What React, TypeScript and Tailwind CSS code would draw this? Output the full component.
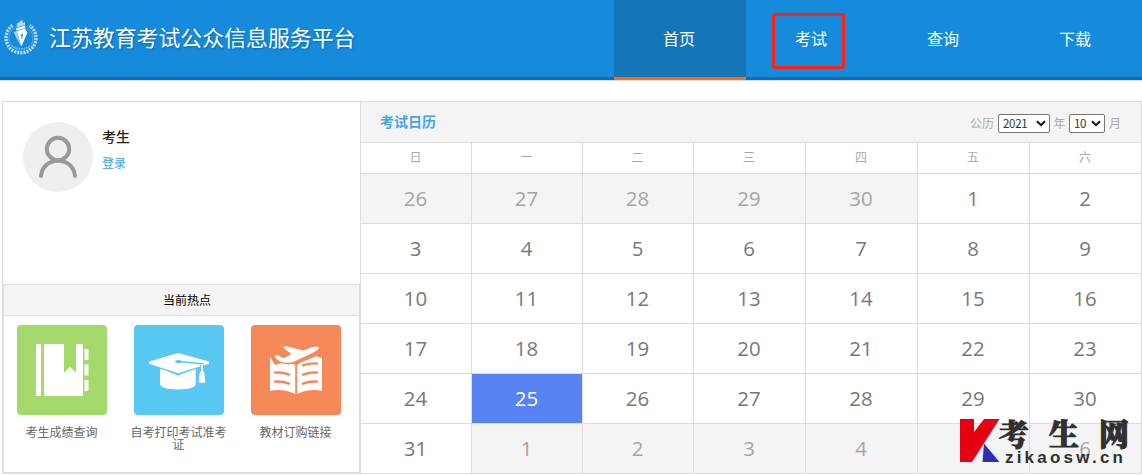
import React from "react";

const NAV = ["首页", "考试", "查询", "下载"];
const WEEKDAYS = ["日", "一", "二", "三", "四", "五", "六"];
const DAYS: { n: number; out: boolean }[] = [
  ...[26, 27, 28, 29, 30].map((n) => ({ n, out: true })),
  ...Array.from({ length: 31 }, (_, i) => ({ n: i + 1, out: false })),
  ...[1, 2, 3, 4, 5, 6].map((n) => ({ n, out: true })),
];
const TODAY = 25;

function Emblem() {
  return (
    <svg className="-mt-[3px]" width="36" height="38" viewBox="0 0 36 38" fill="none">
      <path d="M9.5 7.5A15 15 0 1 0 26.5 7.5" stroke="#b4d9f5" strokeWidth="3.4" strokeDasharray="2.1 1" />
      <path d="M12.5 9.5A12 12 0 1 0 23.5 9.5" stroke="#6fb8ea" strokeWidth="0.7" />
      <path d="M9 28Q18 33 27 28" stroke="#8cc5ee" strokeWidth="1.1" strokeDasharray="1.4 1" />
      <path d="M14 5.5L18.5 2.5L19.5 1.5L19.8 5L22 4L22 7L13.5 9.5Z" fill="#b6daf5" />
      <path d="M12.8 10.5L22 7.5L22.3 10L13.5 12.5Z" fill="#fff" />
      <path d="M10.5 14L14 13L17.8 28.5Z" fill="#9fd0f2" />
      <path d="M14 13L22 10.5L24.5 14.5L18.3 28.5Z" fill="#fff" />
      <path d="M18 16.5L20 15.5L19 22.5Z" fill="#168bdb" />
    </svg>
  );
}

function Header() {
  return (
    <header className="flex h-[81px] border-b border-[#d9dcdf]">
      <div className="flex h-20 w-[614px] items-center border-b-[3px] border-[#0070bf] bg-[#168bdb] pl-[3px]">
        <Emblem />
        <h1 className="-mt-1 ml-[10px] text-[21.9px] leading-[30px] font-normal whitespace-nowrap text-white [text-shadow:1px_1px_2px_rgba(0,60,120,0.45)]">
          江苏教育考试公众信息服务平台
        </h1>
      </div>
      <nav className="flex h-20 flex-1 bg-[#168bdb] text-base text-white">
        {NAV.map((label, i) => (
          <a
            key={label}
            className={
              i === 0
                ? "flex w-[132px] items-center justify-center border-b-[3px] border-[#ff6c00] bg-[#1475b9] pr-[2px] pb-[2px]"
                : "relative flex w-[132px] items-center justify-center border-b-[3px] border-[#0070bf] pr-[2px] pb-[2px]"
            }
          >
            {label}
            {i === 1 && (
              <span className="absolute top-[13px] left-[26px] h-14 w-[73px] rounded-[3px] border-[3px] border-[#ff2013]" />
            )}
          </a>
        ))}
      </nav>
    </header>
  );
}

function Avatar() {
  return (
    <svg width="70" height="70" viewBox="0 0 70 70" fill="none" stroke="#999" strokeWidth="4">
      <circle cx="35" cy="35" r="35" fill="#efefef" stroke="none" />
      <circle cx="35" cy="27" r="11.2" />
      <path d="M18 54C18.8 45 25.5 38.7 35 38.7S51.2 45 52 54" strokeLinecap="round" />
    </svg>
  );
}

function BookIcon() {
  return (
    <svg width="90" height="90" viewBox="0 0 90 90" fill="#fff">
      <path d="M19 19h5v52h-5zM27 19h20v28.5l6-5.5l6 5.5V19h7v52H27zM67.5 24h4v11h-4zM67.5 39.5h4v11h-4zM67.5 55h4v11h-4z" />
    </svg>
  );
}

function CapIcon() {
  return (
    <svg width="90" height="90" viewBox="0 0 90 90" fill="#fff">
      <path d="M26 43V59Q27 64.4 44 64.4T61.7 59V43L44 50.5Z" />
      <path
        d="M15 36.6L44 27.9L75 36.6V38.8L44 48.2L15 38.8Z"
        stroke="#57c8f2"
        strokeWidth="2.4"
        paintOrder="stroke"
      />
      <path d="M45 36.5L68 38.7V44" fill="none" stroke="#57c8f2" strokeWidth="1.6" />
      <ellipse cx="44.5" cy="36.4" rx="3.4" ry="1.5" fill="#57c8f2" />
      <path
        d="M67.3 39h1.6v7q1.6 .7 1.6 3l.8 8.7h-6.6l.8-8.7q0-2.3 1.8-3z"
        stroke="#57c8f2"
        strokeWidth="1.6"
        paintOrder="stroke"
      />
    </svg>
  );
}

function TextbookIcon() {
  return (
    <svg width="90" height="90" viewBox="0 0 90 90" fill="#fff">
      <path d="M19 32L24 40Q36 35.5 44.2 40V69Q32 63 19 66Z" />
      <path d="M46 40Q51 36 56 35L65 31.2L71 32.8V66Q58 63 46 69Z" />
      <path
        d="M23 30.2L27.5 30.4L32 33.2L40.5 29.2L32 22.6Q33 20.8 36.5 21.4L52 25.5L60.5 22.2Q67 20.8 68 22.6Q67.8 25 60.5 28.6L42 37Q36 39 28.5 36.2Q25 34.5 23 30.2Z"
        stroke="#f5895a"
        strokeWidth="3"
        paintOrder="stroke"
      />
      <g fill="none" stroke="#f5895a" strokeWidth="2.4">
        <path d="M23 47.6Q31 46.8 39 49.8M23 56.6Q31 55.8 39 58.8M51 40.6Q59 37.8 67 38.6M51 49.8Q59 46.8 67 47.6M51 58.8Q59 55.8 67 56.6" />
      </g>
    </svg>
  );
}

function Sidebar() {
  return (
    <aside className="flex w-[358px] flex-col border-l border-[#ddd]">
      <div className="flex h-[182px] pt-5 pl-5">
        <Avatar />
        <div className="ml-[9px] pt-1">
          <div className="text-sm leading-5 font-medium text-[#222]">考生</div>
          <a className="mt-2 block text-xs leading-[18px] text-[#3ba1e6]">登录</a>
        </div>
      </div>
      <section className="flex flex-1 flex-col border border-b-2 border-[#ddd]">
        <h2 className="flex h-[31px] items-center justify-center border-b border-[#ddd] bg-[#f4f4f4] pl-[11px] text-xs font-normal text-black">
          当前热点
        </h2>
        <div className="-ml-px flex pt-[9px] text-center text-xs leading-3 text-[#666]">
          <a className="flex w-[117px] flex-col items-center">
            <span className="rounded bg-[#a4d96c]"><BookIcon /></span>
            <span className="mt-[11px]">考生成绩查询</span>
          </a>
          <a className="flex w-[117px] flex-col items-center">
            <span className="rounded bg-[#57c8f2]"><CapIcon /></span>
            <span className="mt-[11px] w-[100px]">自考打印考试准考证</span>
          </a>
          <a className="flex w-[117px] flex-col items-center">
            <span className="rounded bg-[#f5895a]"><TextbookIcon /></span>
            <span className="mt-[11px]">教材订购链接</span>
          </a>
        </div>
      </section>
    </aside>
  );
}

function Select({ value, className }: { value: string; className: string }) {
  return (
    <span className={"relative block h-[19px] " + className}>
      <select
        defaultValue={value}
        className="block h-full w-full appearance-none rounded-[2px] border border-[#767676] bg-white pl-1 font-['Noto_Sans_CJK_SC',sans-serif] text-[11.5px] leading-[17px] tracking-[-0.3px] text-[#333]"
      >
        <option>{value}</option>
      </select>
      <svg className="absolute top-[6px] right-[4px]" width="10" height="7" viewBox="0 0 10 7" fill="none">
        <path d="M1 1.2L5 5.2L9 1.2" stroke="#111" strokeWidth="2" />
      </svg>
    </span>
  );
}

function Calendar() {
  return (
    <section className="w-[782px] border-l border-[#ddd]">
      <div className="flex h-[41px] items-center justify-between border-r border-b border-[#ddd] bg-[#f4f4f4] pr-5 pl-[19px]">
        <h2 className="pb-[2px] text-sm font-bold text-[#44a4e6]">考试日历</h2>
        <div className="flex items-center pt-[2px] text-xs text-[#aaa]">
          <span className="mr-[4px]">公历</span>
          <Select value="2021" className="w-[52px]" />
          <span className="mx-[3.5px]">年</span>
          <Select value="10" className="w-9" />
          <span className="ml-[4px]">月</span>
        </div>
      </div>
      <div className="grid grid-cols-[111px_111px_111px_112px_112px_112px_112px] text-center">
        {WEEKDAYS.map((d) => (
          <div key={d} className="h-[31px] border-r border-b border-[#ddd] pr-px text-xs leading-[28px] text-[#aaa]">
            {d}
          </div>
        ))}
        {DAYS.map(({ n, out }, i) => (
          <div
            key={i}
            className={
              "h-[50px] border-r border-b border-[#ddd] pr-px font-['Open_Sans',sans-serif] text-[20.4px] leading-[49px] " +
              (out ? "bg-[#f4f4f4] text-[#a5a5a5]" : n === TODAY ? "bg-[#5783f3] text-white" : "text-[#787878]")
            }
          >
            {n}
          </div>
        ))}
      </div>
    </section>
  );
}

function Watermark() {
  return (
    <div className="absolute top-[416px] left-[960px] flex h-[50px] w-[172px]">
      <svg className="mt-[3px] shrink-0" width="40" height="43" viewBox="0 0 40 43">
        <path d="M0 0H14V13L24 0H39.5L12 43H0Z" fill="#e60012" />
        <path d="M24 24.5L39.5 43H22.5Z" fill="#2b2fb5" />
      </svg>
      <div className="-ml-[1px] text-[#303030]">
        <div className="flex w-[130px] justify-between font-['Noto_Serif_CJK_SC','Noto_Sans_CJK_SC',serif] text-[30px] leading-[32px] font-black [-webkit-text-stroke:1px_#303030]">
          <span>考</span>
          <span>生</span>
          <span>网</span>
        </div>
        <div className="ml-[6px] font-['Liberation_Sans',sans-serif] text-[17px] leading-[20px] font-bold tracking-[3.2px] whitespace-nowrap">
          zikaosw.cn
        </div>
      </div>
    </div>
  );
}

export default function App() {
  return (
    <div className="relative h-[476px] w-[1142px] overflow-hidden bg-white font-['Noto_Sans_CJK_SC',sans-serif]">
      <Header />
      <main className="mt-5 ml-[2px] flex h-[373px] w-[1140px] border-t border-[#ddd]">
        <Sidebar />
        <Calendar />
      </main>
      <Watermark />
    </div>
  );
}
